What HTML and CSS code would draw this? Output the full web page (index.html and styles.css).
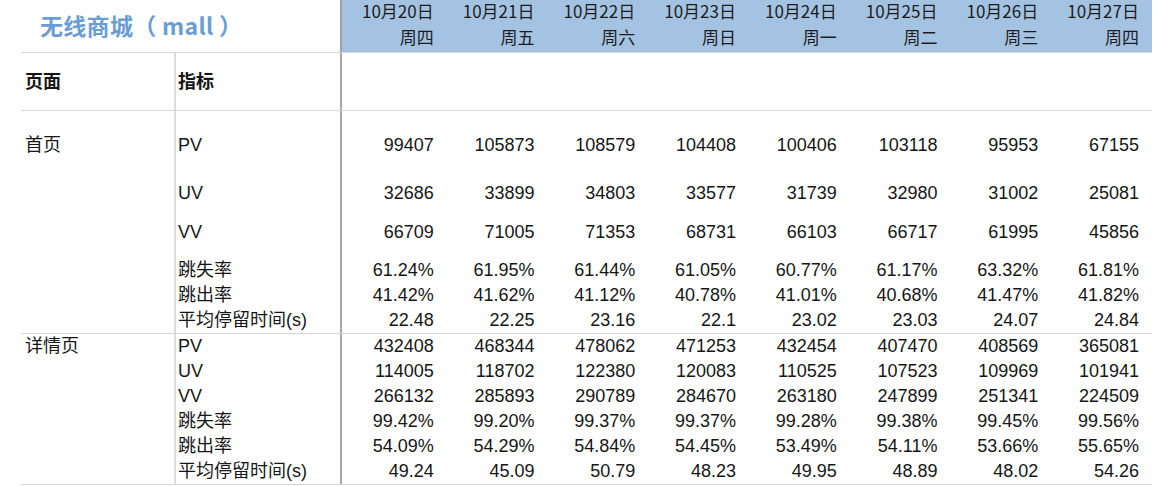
FILE: index.html
```html
<!DOCTYPE html>
<html lang="zh">
<head>
<meta charset="utf-8">
<title>无线商城（mall）</title>
<link rel="stylesheet" href="styles.css">
</head>
<body>
<div class="sheet">
  <div class="top">
    <div class="title">无线商城（ mall ）</div>
    <div class="band">
      <div class="day"><span class="date">10月20日</span><span class="week">周四</span></div>
      <div class="day"><span class="date">10月21日</span><span class="week">周五</span></div>
      <div class="day"><span class="date">10月22日</span><span class="week">周六</span></div>
      <div class="day"><span class="date">10月23日</span><span class="week">周日</span></div>
      <div class="day"><span class="date">10月24日</span><span class="week">周一</span></div>
      <div class="day"><span class="date">10月25日</span><span class="week">周二</span></div>
      <div class="day"><span class="date">10月26日</span><span class="week">周三</span></div>
      <div class="day"><span class="date">10月27日</span><span class="week">周四</span></div>
    </div>
  </div>

  <div class="row head">
    <div class="c-page">页面</div>
    <div class="c-metric">指标</div>
    <div class="c-vals"></div>
  </div>

  <div class="section">
    <div class="row h47">
      <div class="c-page">首页</div>
      <div class="c-metric">PV</div>
      <div class="c-vals"><span>99407</span><span>105873</span><span>108579</span><span>104408</span><span>100406</span><span>103118</span><span>95953</span><span>67155</span></div>
    </div>
    <div class="row h48">
      <div class="c-page"></div>
      <div class="c-metric">UV</div>
      <div class="c-vals"><span>32686</span><span>33899</span><span>34803</span><span>33577</span><span>31739</span><span>32980</span><span>31002</span><span>25081</span></div>
    </div>
    <div class="row h39">
      <div class="c-page"></div>
      <div class="c-metric">VV</div>
      <div class="c-vals"><span>66709</span><span>71005</span><span>71353</span><span>68731</span><span>66103</span><span>66717</span><span>61995</span><span>45856</span></div>
    </div>
    <div class="row h38">
      <div class="c-page"></div>
      <div class="c-metric">跳失率</div>
      <div class="c-vals"><span>61.24%</span><span>61.95%</span><span>61.44%</span><span>61.05%</span><span>60.77%</span><span>61.17%</span><span>63.32%</span><span>61.81%</span></div>
    </div>
    <div class="row">
      <div class="c-page"></div>
      <div class="c-metric">跳出率</div>
      <div class="c-vals"><span>41.42%</span><span>41.62%</span><span>41.12%</span><span>40.78%</span><span>41.01%</span><span>40.68%</span><span>41.47%</span><span>41.82%</span></div>
    </div>
    <div class="row">
      <div class="c-page"></div>
      <div class="c-metric">平均停留时间(s)</div>
      <div class="c-vals"><span>22.48</span><span>22.25</span><span>23.16</span><span>22.1</span><span>23.02</span><span>23.03</span><span>24.07</span><span>24.84</span></div>
    </div>
  </div>

  <div class="section">
    <div class="row">
      <div class="c-page">详情页</div>
      <div class="c-metric">PV</div>
      <div class="c-vals"><span>432408</span><span>468344</span><span>478062</span><span>471253</span><span>432454</span><span>407470</span><span>408569</span><span>365081</span></div>
    </div>
    <div class="row">
      <div class="c-page"></div>
      <div class="c-metric">UV</div>
      <div class="c-vals"><span>114005</span><span>118702</span><span>122380</span><span>120083</span><span>110525</span><span>107523</span><span>109969</span><span>101941</span></div>
    </div>
    <div class="row">
      <div class="c-page"></div>
      <div class="c-metric">VV</div>
      <div class="c-vals"><span>266132</span><span>285893</span><span>290789</span><span>284670</span><span>263180</span><span>247899</span><span>251341</span><span>224509</span></div>
    </div>
    <div class="row">
      <div class="c-page"></div>
      <div class="c-metric">跳失率</div>
      <div class="c-vals"><span>99.42%</span><span>99.20%</span><span>99.37%</span><span>99.37%</span><span>99.28%</span><span>99.38%</span><span>99.45%</span><span>99.56%</span></div>
    </div>
    <div class="row">
      <div class="c-page"></div>
      <div class="c-metric">跳出率</div>
      <div class="c-vals"><span>54.09%</span><span>54.29%</span><span>54.84%</span><span>54.45%</span><span>53.49%</span><span>54.11%</span><span>53.66%</span><span>55.65%</span></div>
    </div>
    <div class="row">
      <div class="c-page"></div>
      <div class="c-metric">平均停留时间(s)</div>
      <div class="c-vals"><span>49.24</span><span>45.09</span><span>50.79</span><span>48.23</span><span>49.95</span><span>48.89</span><span>48.02</span><span>54.26</span></div>
    </div>
  </div>
</div>
</body>
</html>
```

FILE: styles.css
```css
* { box-sizing: border-box; }

html, body {
  margin: 0;
  padding: 0;
  background: #ffffff;
}

body {
  font-family: "Liberation Sans", "Noto Sans CJK SC", sans-serif;
  font-size: 18px;
  color: #161616;
  overflow: hidden;
}

.sheet {
  margin-left: 21px;
  width: 1131px;
}

/* ---------- top: title + date band ---------- */
.top {
  display: grid;
  grid-template-columns: 319px 812px;
  height: 53px;
  border-bottom: 1px solid #d6d6d6;
}

.title {
  display: flex;
  align-items: center;
  padding-left: 19px;
  padding-bottom: 3px;
  font-family: "Noto Sans CJK SC", sans-serif;
  font-weight: 700;
  font-size: 23px;
  letter-spacing: 0.3px;
  color: #6a9dd5;
  white-space: nowrap;
}

.band {
  background: #a4c3e3;
  border-left: 2px solid #a2a2a2;
  display: grid;
  grid-template-columns: repeat(8, 100.75px);
  align-content: start;
}

.day {
  display: flex;
  flex-direction: column;
  align-items: flex-end;
  padding-right: 9px;
  font-family: "Noto Sans CJK SC", sans-serif;
  font-size: 17px;
  color: #1c1c1c;
  white-space: nowrap;
}

.date {
  line-height: 22px;
}

.week {
  line-height: 30px;
}

/* ---------- rows ---------- */
.row {
  display: grid;
  grid-template-columns: 153px 166px 812px;
  height: 25px;
  line-height: 25px;
}

.row.h47 { height: 47px; }
.row.h48 { height: 48px; }
.row.h39 { height: 39px; }
.row.h38 { height: 38px; }

.row.head {
  height: 58px;
  border-bottom: 1px solid #d6d6d6;
  font-family: "Noto Sans CJK SC", sans-serif;
  font-weight: 700;
  font-size: 18px;
}

.row.head .c-page,
.row.head .c-metric {
  align-items: center;
  padding-bottom: 2px;
}

.c-page {
  display: flex;
  align-items: flex-end;
  padding-left: 4px;
  white-space: nowrap;
}

.c-metric {
  display: flex;
  align-items: flex-end;
  padding-left: 2px;
  border-left: 2px solid #dcdcdc;
  white-space: nowrap;
}

.c-vals {
  display: grid;
  grid-template-columns: repeat(8, 100.75px);
  align-items: end;
  border-left: 2px solid #a8a8a8;
}

.c-vals span {
  text-align: right;
  padding-right: 9px;
  white-space: nowrap;
}

.section {
  border-bottom: 1px solid #d6d6d6;
}
```
